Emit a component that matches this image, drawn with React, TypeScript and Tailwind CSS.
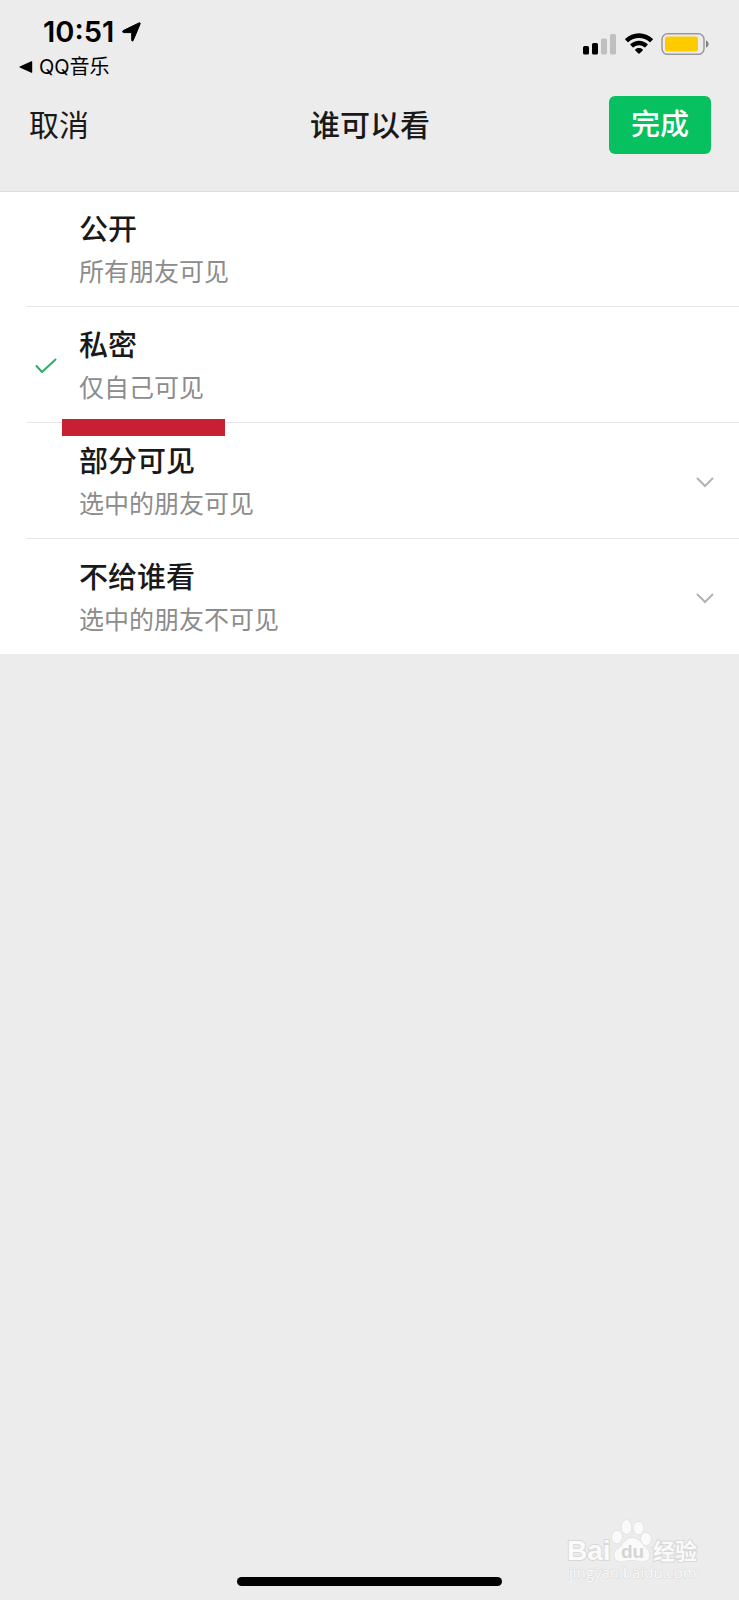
import { useState } from 'react';

interface VisibilityOption {
  id: string;
  title: string;
  description: string;
  expandable: boolean;
}

const OPTIONS: VisibilityOption[] = [
  { id: 'public', title: '公开', description: '所有朋友可见', expandable: false },
  { id: 'private', title: '私密', description: '仅自己可见', expandable: false },
  { id: 'partial', title: '部分可见', description: '选中的朋友可见', expandable: true },
  { id: 'exclude', title: '不给谁看', description: '选中的朋友不可见', expandable: true },
];

function StatusBar() {
  return (
    <div className="flex items-start justify-between pt-4 pr-[30px] pl-[19px] text-black">
      <div>
        <div className="flex items-center gap-2 pl-6">
          <span className="text-[29px] leading-8 font-semibold">10:51</span>
          <svg className="h-5 w-[19px]" viewBox="0 0 19 20" aria-hidden="true">
            <path
              d="M1.200 8.600 17 .9c.9-.4 1.500.2 1.100 1.100L11.200 18.400c-.5 1-1.500.8-1.500-.2V10.600H1.600c-1.100 0-1.300-1.500-.4-2Z"
              fill="currentColor"
              stroke="currentColor"
              strokeWidth="1"
              strokeLinejoin="round"
            />
          </svg>
        </div>
        <a href="#qq" className="flex items-center gap-[6px] pt-px text-[20px] leading-9">
          <svg className="h-3 w-[14px]" viewBox="0 0 14 12" aria-hidden="true">
            <path d="M.8 5.500 12.300.3c.5-.2.9 0 .9.5v10.400c0 .5-.4.7-.9.500L.8 6.500c-.5-.3-.5-.8 0-1Z" fill="currentColor" />
          </svg>
          <span>QQ音乐</span>
        </a>
      </div>

      <div className="flex items-center gap-2 pt-[17px]">
        <svg className="h-[22px] w-[34px]" viewBox="0 0 34 22" aria-hidden="true">
          <rect x="0" y="13" width="6" height="8.500" rx="1.500" />
          <rect x="9" y="10" width="6" height="11.500" rx="1.500" />
          <rect x="18" y="5.500" width="6" height="16" rx="1.500" fill="#c0c0c0" />
          <rect x="27" y="1" width="6" height="20.500" rx="1.500" fill="#c0c0c0" />
        </svg>
        <svg className="h-[22px] w-7" viewBox="0 0 28 22" aria-hidden="true">
          <path d="M14 .3C8.700.3 3.900 2.400.3 5.800c-.3.3-.3.6 0 .9l2.300 2.300c.3.3.6.3.9 0C6.300 6.400 9.900 5 14 5s7.700 1.400 10.500 4c.3.3.6.3.9 0l2.300-2.300c.3-.3.3-.6 0-.9C24.100 2.400 19.300.3 14 .3Z" />
          <path d="M14 7.700c-3.300 0-6.300 1.300-8.500 3.400-.3.3-.3.6 0 .9l2.200 2.200c.3.3.6.3.9 0 1.500-1.300 3.300-2 5.400-2s3.900.7 5.400 2c.3.3.6.3.9 0l2.200-2.200c.3-.3.3-.6 0-.9C20.300 9 17.300 7.700 14 7.700Z" />
          <path d="M14 15.100c-1.400 0-2.700.5-3.700 1.400-.3.3-.3.6 0 .9l3.200 3.200c.3.3.7.3 1 0l3.200-3.200c.3-.3.3-.6 0-.9-1-.9-2.300-1.400-3.700-1.400Z" />
        </svg>
        <svg className="h-[22px] w-12" viewBox="0 0 48 22" aria-hidden="true">
          <rect x="1" y=".8" width="42" height="20.500" rx="5.500" fill="none" stroke="#999" strokeWidth="1.500" />
          <rect x="4" y="3.500" width="33" height="15" rx="2.500" fill="#fecb00" />
          <path d="M45 7.500c1.600.6 2.600 2 2.600 3.600s-1 3-2.600 3.600Z" fill="#808080" />
        </svg>
      </div>
    </div>
  );
}

function OptionRow({
  option,
  checked,
  onSelect,
}: {
  option: VisibilityOption;
  checked: boolean;
  onSelect: () => void;
}) {
  return (
    <label className="group block cursor-pointer pl-[27px]">
      <input
        type="radio"
        name="visibility"
        value={option.id}
        checked={checked}
        onChange={onSelect}
        className="sr-only"
      />
      <span className="flex items-center border-b border-[#e6e6e6] pt-[17px] pr-[25px] pb-[14px] group-first:pt-4 group-last:border-b-0">
        <span className="w-[52px] shrink-0 pl-2">
          {checked && (
            <svg className="h-4 w-[22px]" viewBox="0 0 22 16" fill="none" aria-hidden="true">
              <path
                d="m1.500 8 5.500 6L20.500 1.500"
                stroke="#2aae67"
                strokeWidth="2"
                strokeLinecap="round"
                strokeLinejoin="round"
              />
            </svg>
          )}
        </span>
        <span className="flex-1">
          <span className="block text-[29px] leading-[44px] font-medium text-[#191919]">{option.title}</span>
          <span className="block text-[25px] leading-10 text-[#8c8c8c]">{option.description}</span>
        </span>
        {option.expandable && (
          <svg className="h-[11px] w-[18px]" viewBox="0 0 18 11" fill="none" aria-hidden="true">
            <path d="m1.500 1.500 7.500 7.500 7.500-7.500" stroke="#b2b2b2" strokeWidth="2" strokeLinecap="round" />
          </svg>
        )}
      </span>
    </label>
  );
}

function Watermark() {
  return (
    <svg
      className="absolute right-[38px] bottom-[18px] h-[66px] w-[136px]"
      viewBox="0 0 136 66"
      fill="#fafafa"
      stroke="#d8d8d8"
      paintOrder="stroke"
      role="img"
      aria-label="Baidu 经验"
    >
      <ellipse cx="52" cy="21" rx="5" ry="6.500" />
      <ellipse cx="61.500" cy="11" rx="5" ry="7" />
      <ellipse cx="73.500" cy="12" rx="5" ry="6.500" />
      <ellipse cx="81" cy="23" rx="5" ry="6.500" />
      <path d="M67 22c-7 0-8 6-12 9s-7 6-5 11c2 4 6 4 9 3s12-1 15 0 8 1 10-3c2-5-1-8-4-11s-6-9-13-9Z" />
      <g strokeWidth="2" fontWeight="700">
        <text x="2" y="44" fontSize="28" fontFamily="Liberation Sans, sans-serif">Bai</text>
        <text x="56" y="42" fontSize="19" fontFamily="Liberation Sans, sans-serif" fill="#d4d4d4" stroke="none">du</text>
        <text x="88" y="43" fontSize="22" fontFamily="Noto Sans CJK SC, sans-serif">经验</text>
      </g>
      <text x="4" y="62" fontSize="15" fontFamily="Open Sans, sans-serif">jingyan.baidu.com</text>
    </svg>
  );
}

export default function App() {
  const [selected, setSelected] = useState('private');

  return (
    <div className="relative flex min-h-screen flex-col bg-[#ececec] font-['Inter','Noto_Sans_CJK_SC',sans-serif]">
      <StatusBar />

      <header className="grid grid-cols-3 items-center border-b border-[#dedede] pt-[11px] pr-7 pb-[37px] pl-[29px]">
        <button type="button" className="justify-self-start text-[30px] leading-10 text-[#191919]">
          取消
        </button>
        <h1 id="page-title" className="text-center text-[30px] leading-10 font-medium text-[#191919]">
          谁可以看
        </h1>
        <button
          type="button"
          className="justify-self-end rounded-md bg-[#07c160] px-[22px] py-[9px] text-[29px] leading-10 font-medium text-white"
        >
          完成
        </button>
      </header>

      <main className="relative bg-white">
        <div role="radiogroup" aria-labelledby="page-title">
          {OPTIONS.map((option) => (
            <OptionRow
              key={option.id}
              option={option}
              checked={selected === option.id}
              onSelect={() => setSelected(option.id)}
            />
          ))}
        </div>
        {/* red underline marker over the divider */}
        <div className="absolute top-[227px] left-[62px] h-[17px] w-[163px] bg-[#c62032]" />
      </main>

      <Watermark />
      <div className="mx-auto mt-auto mb-[14px] h-[9px] w-[265px] rounded-full bg-black" />
    </div>
  );
}
